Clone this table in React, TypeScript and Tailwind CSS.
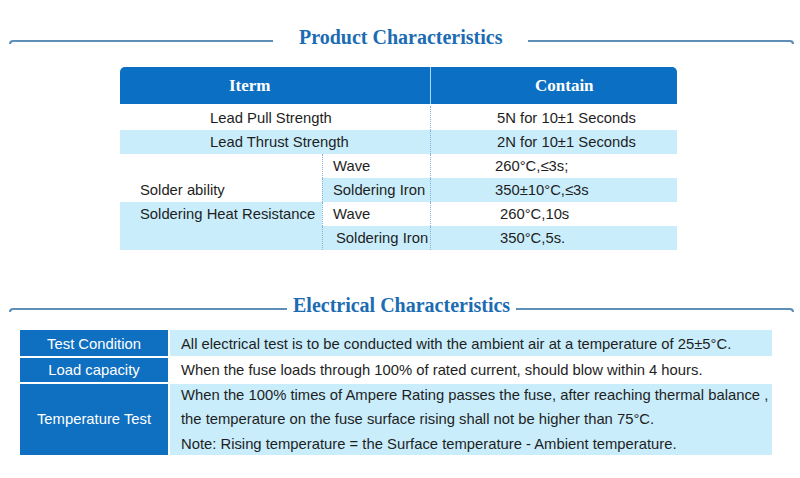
import React from 'react'

const SANS = "font-['Liberation_Sans',Arial,sans-serif]"
const SERIF = "font-['Liberation_Serif','Times_New_Roman',serif]"

function SectionTitle({ title, leftWidth, gap }: { title: string; leftWidth: string; gap: string }) {
  return (
    <div className="flex items-center h-[24px] pl-[9px] pr-[6px]">
      <div className={`${leftWidth} h-[4px] mt-[9px] border-t-2 border-l-2 border-[#5d8fb8] rounded-tl-[5px]`} />
      <h2 className={`${SERIF} ${gap} text-[20px] font-bold text-[#1b6cb3] leading-none whitespace-nowrap`}>{title}</h2>
      <div className="flex-1 h-[4px] mt-[9px] border-t-2 border-r-2 border-[#5d8fb8] rounded-tr-[5px]" />
    </div>
  )
}

const soldering = [
  {
    label: 'Solder ability',
    labelRow: 1,
    leftBg: 'bg-white',
    rows: [
      { sub: 'Wave', value: '260°C,≤3s;', subPad: 'pl-[10px]', valPad: 'pl-[64px]', bg: 'bg-white' },
      { sub: 'Soldering Iron', value: '350±10°C,≤3s', subPad: 'pl-[10px]', valPad: 'pl-[64px]', bg: 'bg-[#c9edfb]' },
    ],
  },
  {
    label: 'Soldering Heat Resistance',
    labelRow: 0,
    leftBg: 'bg-[#c9edfb]',
    rows: [
      { sub: 'Wave', value: '260°C,10s', subPad: 'pl-[10px]', valPad: 'pl-[69px]', bg: 'bg-white' },
      { sub: 'Soldering Iron', value: '350°C,5s.', subPad: 'pl-[13px]', valPad: 'pl-[69px]', bg: 'bg-[#c9edfb]' },
    ],
  },
]

export default function App() {
  return (
    <div className={`w-[800px] h-[478px] bg-white overflow-hidden ${SANS} text-[14.8px] text-[#1e1e1e]`}>
      <div className="pt-[25px]">
        <SectionTitle title="Product Characteristics" leftWidth="w-[264px]" gap="mx-[26px]" />
      </div>

      {/* Product table */}
      <div className="ml-[120px] w-[557px] mt-[18px]">
        <div className={`flex h-[37px] bg-[#0b6fc3] rounded-t-[5px] text-white font-bold ${SERIF} text-[17px]`}>
          <div className="w-[310px] pl-[109px] flex items-center">Iterm</div>
          <div className="w-px bg-[#a6dbf5]" />
          <div className="flex-1 pl-[104px] flex items-center">Contain</div>
        </div>

        {[
          { item: 'Lead Pull Strength', value: '5N for 10±1 Seconds', bg: 'bg-white' },
          { item: 'Lead Thrust Strength', value: '2N for 10±1 Seconds', bg: 'bg-[#c9edfb]' },
        ].map((r, i) => (
          <div key={r.item} className={`flex h-[24px] items-center ${r.bg} ${i === 0 ? 'mt-[2px]' : ''}`}>
            <div className="w-[310px] pl-[90px]">{r.item}</div>
            <div className="flex-1 h-full flex items-center pl-[66px] border-l border-dotted border-[#86b3d6]">{r.value}</div>
          </div>
        ))}

        {soldering.map(group => (
          <div key={group.label} className="flex">
            <div className={`w-[202px] ${group.leftBg} flex flex-col`}>
              {group.rows.map((_, j) => (
                <div key={j} className="h-[24px] flex items-center pl-[20px] whitespace-nowrap">
                  {j === group.labelRow ? group.label : ''}
                </div>
              ))}
            </div>
            <div className="flex-1 flex flex-col">
              {group.rows.map(r => (
                <div key={r.sub + r.value} className={`flex h-[24px] ${r.bg}`}>
                  <div className={`w-[108px] flex items-center ${r.subPad} border-l border-dotted border-[#86b3d6]`}>{r.sub}</div>
                  <div className={`flex-1 flex items-center ${r.valPad} border-l border-dotted border-[#86b3d6]`}>{r.value}</div>
                </div>
              ))}
            </div>
          </div>
        ))}
      </div>

      <div className="mt-[43px]">
        <SectionTitle title="Electrical Characteristics" leftWidth="w-[278px]" gap="mx-[6px]" />
      </div>

      {/* Electrical table */}
      <div className="ml-[20px] w-[752px] mt-[13px] flex flex-col gap-[2px]">
        <div className="flex h-[26px] gap-[2px]">
          <div className="w-[148px] bg-[#0f6fc1] text-white flex items-center justify-center pt-[2px]">Test Condition</div>
          <div className="flex-1 bg-[#c9edfb] flex items-center pl-[11px] pt-[2px]">
            All electrical test is to be conducted with the ambient air at a temperature of 25±5°C.
          </div>
        </div>
        <div className="flex h-[24px] gap-[2px]">
          <div className="w-[148px] bg-[#0f6fc1] text-white flex items-center justify-center">Load capacity</div>
          <div className="flex-1 bg-white flex items-center pl-[11px]">
            When the fuse loads through 100% of rated current, should blow within 4 hours.
          </div>
        </div>
        <div className="flex h-[71px] gap-[2px]">
          <div className="w-[148px] bg-[#0f6fc1] text-white flex items-center justify-center">Temperature Test</div>
          <div className="flex-1 bg-[#c9edfb] flex flex-col justify-center pl-[11px] leading-[24.5px]">
            <p>When the 100% times of Ampere Rating passes the fuse, after reaching thermal balance ,</p>
            <p>the temperature on the fuse surface rising shall not be higher than 75°C.</p>
            <p>Note: Rising temperature = the Surface temperature - Ambient temperature.</p>
          </div>
        </div>
      </div>
    </div>
  )
}
